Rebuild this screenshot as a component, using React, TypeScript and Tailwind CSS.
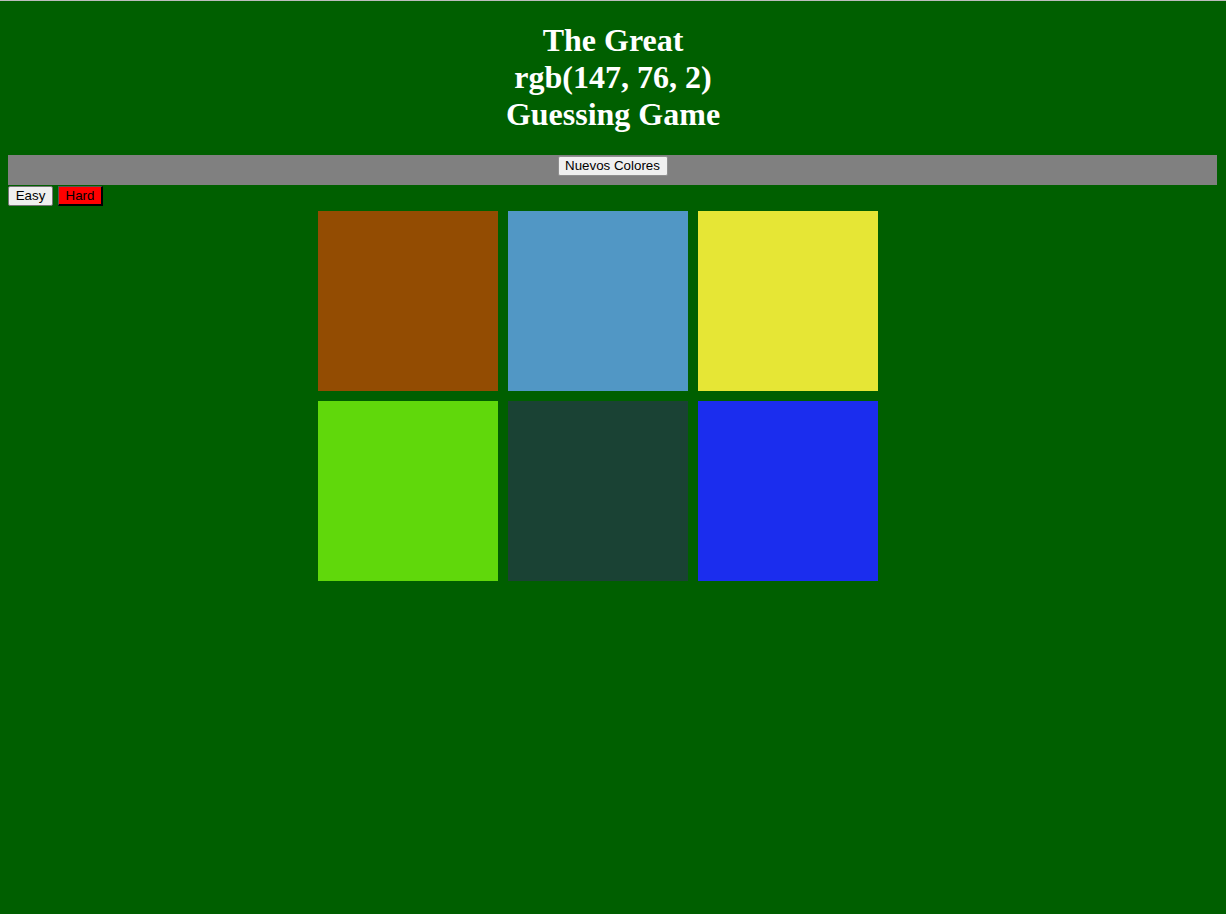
const COLORS = [
    'rgb(147, 76, 2)',
    'rgb(81, 151, 197)',
    'rgb(230, 230, 53)',
    'rgb(96, 216, 11)',
    'rgb(26, 66, 52)',
    'rgb(27, 45, 238)',
]

const btn = "h-[20px] px-[6px] text-[13.33px] leading-none border rounded-[2px] font-['Liberation_Sans',Arial,sans-serif]"

export default function App() {
    return (
        <div className="min-h-[914px] bg-[#005f00] border-t border-[#bcbcbc]">
            {/* Title */}
            <h1 className="pt-[21px] pb-[22px] text-center text-white font-bold text-[32px] leading-[37px] font-['Liberation_Serif','Times_New_Roman',serif]">
                The Great
                <br />
                <span>rgb(147, 76, 2)</span>
                <br />
                Guessing Game
            </h1>

            {/* Bar */}
            <div className="ml-[8px] mr-[9px] h-[30px] bg-[#808080] flex justify-center items-start pt-[1px]">
                <button className={`${btn} w-[110px] bg-[#efefef] border-[#8f8f8f] text-black`}>Nuevos Colores</button>
            </div>

            <div className="flex gap-[5px] px-[8px] mt-[1px]">
                <button className={`${btn} w-[45px] bg-[#efefef] border-[#767676] text-black`}>Easy</button>
                <button className={`${btn} w-[45px] bg-[#ff0000] border-t border-l border-r-2 border-b-2 border-t-[#555] border-l-[#555] border-r-black border-b-black text-black rounded-none`}>Hard</button>
            </div>

            {/* Squares */}
            <div className="w-[600px] mx-auto pl-[5px] pt-[5px] flex flex-wrap gap-[10px]">
                {COLORS.map(c => (
                    <div key={c} className="w-[180px] h-[180px]" style={{ backgroundColor: c }} />
                ))}
            </div>
        </div>
    )
}
